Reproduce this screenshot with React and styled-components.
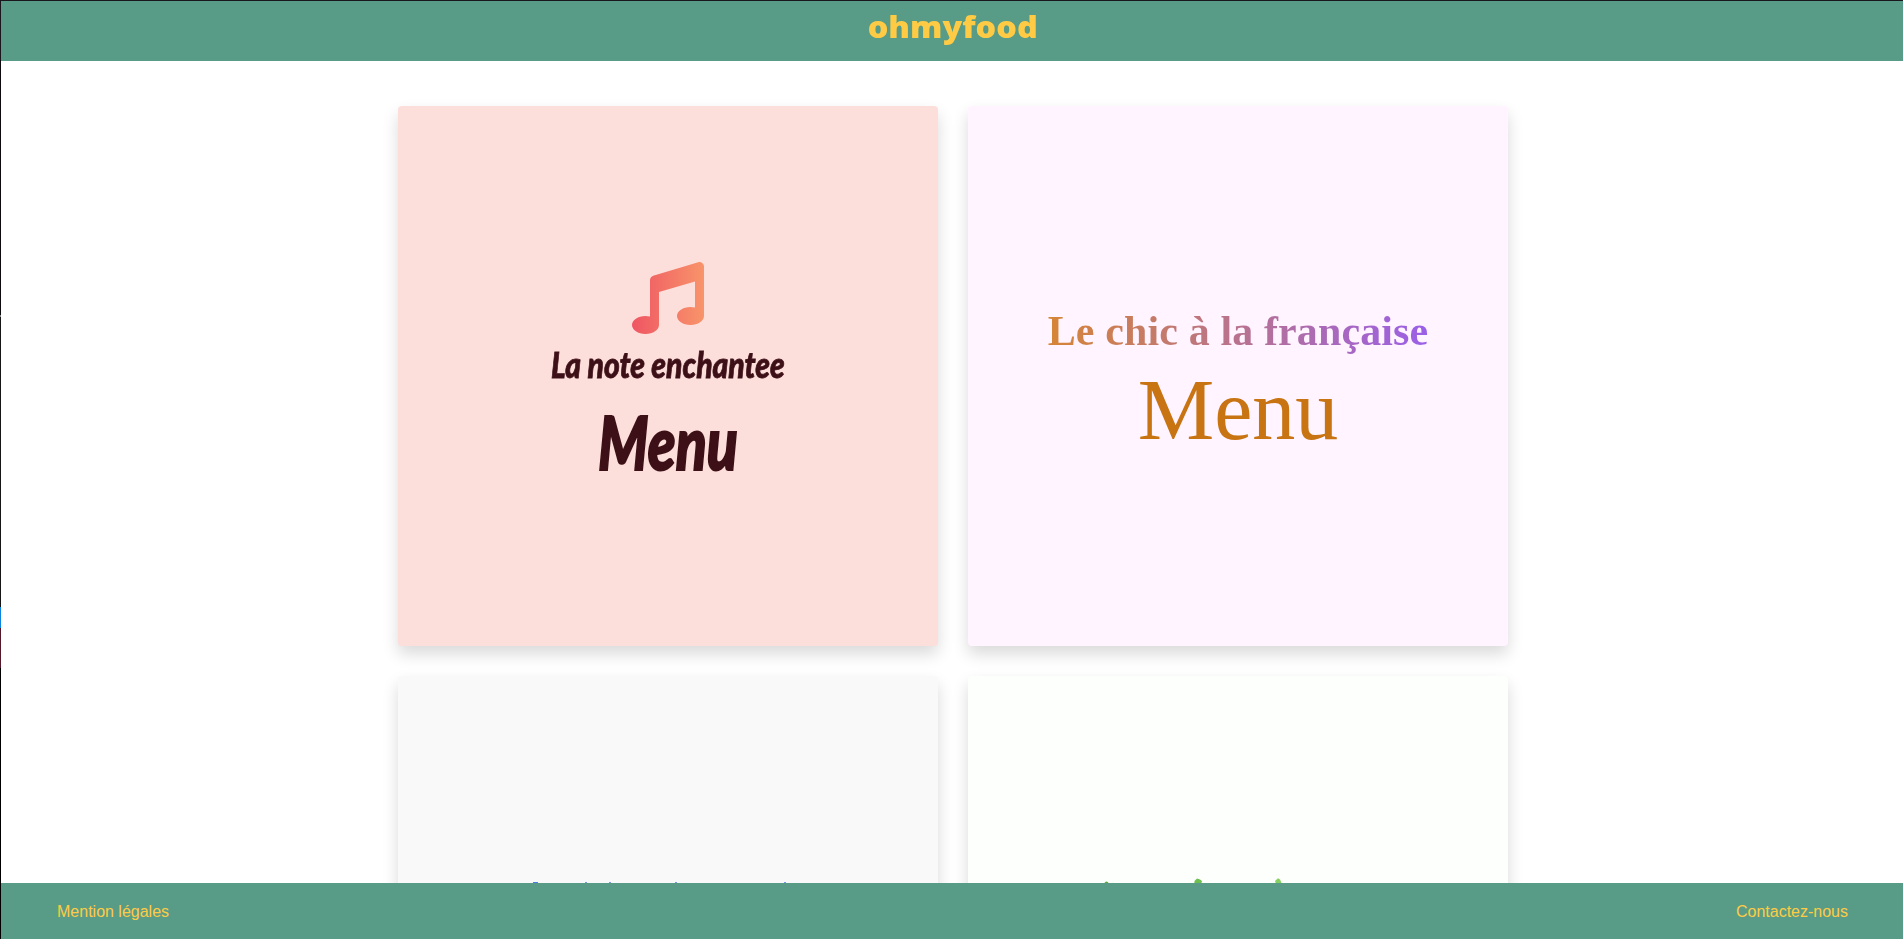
import React from "react";
import styled, { createGlobalStyle } from "styled-components";

const GlobalStyle = createGlobalStyle`
  * { box-sizing: border-box; }
  body { margin: 0; background: #fff; overflow: hidden; }
`;

const Page = styled.div`
  height: 939px;
  display: flex;
  flex-direction: column;
  overflow: hidden;
  border-top: 1px solid #0e0b10;
  border-left: 1px solid;
  border-image: linear-gradient(#1a171c 0 60px, #0e0b10 60px 315px, #8a8a8a 315px 317px, #161616 317px 606px, #0a84dc 606px 627px, #54182a 627px 667px, #000 667px) 1;
  font-family: "Liberation Sans", Arial, sans-serif;
`;

const Header = styled.header`
  flex: 0 0 60px;
  display: flex;
  justify-content: center;
  background: #589c87;
`;

const Logo = styled.h1`
  margin: 6px 0 0 1px;
  font: 800 30px/40px "Open Sans", sans-serif;
  color: #ffcb45;
  transform: scaleX(1.08);
`;

const Main = styled.main`
  flex: 1;
  min-height: 0;
  overflow: hidden;
  display: flex;
  justify-content: center;
  align-items: flex-start;
  padding-top: 45px;
`;

const Grid = styled.div`
  display: grid;
  grid-template-columns: 540px 540px;
  grid-auto-rows: 540px;
  gap: 30px;
  margin-left: 2px;
`;

const Card = styled.article`
  display: flex;
  flex-direction: column;
  align-items: center;
  padding-top: ${(p) => p.$top}px;
  border-radius: 4px;
  background: ${(p) => p.$bg};
  box-shadow: 0 8px 16px rgba(0, 0, 0, 0.15);
`;

const Script = styled.div`
  font: italic 900 ${(p) => p.$size}px/${(p) => p.$line}px Lato, sans-serif;
  color: #3d1018;
  white-space: nowrap;
  -webkit-text-stroke: ${(p) => p.$stroke}px #3d1018;
  transform: scaleX(${(p) => p.$stretch});
`;

const ChicTitle = styled.h2`
  margin: 0;
  font: 700 42px/54px "Liberation Serif", serif;
  letter-spacing: 0.12px;
  white-space: nowrap;
  color: transparent;
  background: linear-gradient(90deg, #d68536, #9a5fe8);
  background-clip: text;
`;

const ChicMenu = styled.div`
  margin-top: 2px;
  font: 400 86px/100px "Liberation Serif", serif;
  color: #c87412;
`;

const Footer = styled.footer`
  flex: 0 0 56px;
  display: flex;
  justify-content: space-between;
  align-items: center;
  padding: 1px 55px 0 56px;
  background: #589c87;
`;

const FooterLink = styled.a`
  font-size: 16px;
  color: #ffcb45;
`;

const MusicIcon = () => (
  <svg width="72" height="72" viewBox="0 0 512 512">
    <defs>
      <linearGradient id="note">
        <stop stopColor="#ef5663" />
        <stop offset="1" stopColor="#f8946a" />
      </linearGradient>
    </defs>
    <path
      fill="url(#note)"
      d="M499.1 6.3c8.1 6 12.9 15.6 12.9 25.7V384c0 35.3-43 64-96 64s-96-28.7-96-64 43-64 96-64c11.2 0 22 1.3 32 3.6V139L192 214V448c0 35.3-43 64-96 64s-96-28.7-96-64 43-64 96-64c11.2 0 22 1.3 32 3.6V128c0-14.1 9.3-26.6 22.8-30.7l320-96c9.7-2.9 20.2-1.1 28.3 5z"
    />
  </svg>
);

const BlueTips = () => (
  <svg width="540" height="10" fill="#4b7de8">
    <rect x="135" y="0" width="5" height="5" />
    <rect x="187" y="0" width="2" height="5" opacity=".8" />
    <rect x="211" y="0" width="2" height="5" opacity=".8" />
    <rect x="277" y="0" width="2" height="5" opacity=".8" />
    <rect x="386" y="0" width="2" height="5" opacity=".8" />
  </svg>
);

const GreenTips = () => (
  <svg width="540" height="14">
    <ellipse cx="138.500" cy="8" rx="2.500" ry="4.500" fill="#5fa845" />
    <path d="M226 10 226.500 3 229 .5 232 1.500 234 3 232 10z" fill="#6dbf50" />
    <path d="M307 3 310 .3 312 1.500 314 6 308 6z" fill="#86d162" />
  </svg>
);

export default function App() {
  return (
    <>
      <GlobalStyle />
      <Page>
        <Header>
          <Logo>ohmyfood</Logo>
        </Header>
        <Main>
          <Grid>
            <Card $bg="#fcdeda" $top={156}>
              <MusicIcon />
              <Script $size={36} $line={60} $stretch={0.835} $stroke={0.8}>La note enchantee</Script>
              <Script $size={75} $line={95} $stretch={0.76} $stroke={2}>Menu</Script>
            </Card>
            <Card $bg="#fff4ff" $top={198}>
              <ChicTitle>Le chic à la française</ChicTitle>
              <ChicMenu>Menu</ChicMenu>
            </Card>
            <Card $bg="#f9f9f9" $top={206}>
              <BlueTips />
            </Card>
            <Card $bg="#fdfffc" $top={202}>
              <GreenTips />
            </Card>
          </Grid>
        </Main>
        <Footer>
          <FooterLink>Mention légales</FooterLink>
          <FooterLink>Contactez-nous</FooterLink>
        </Footer>
      </Page>
    </>
  );
}
